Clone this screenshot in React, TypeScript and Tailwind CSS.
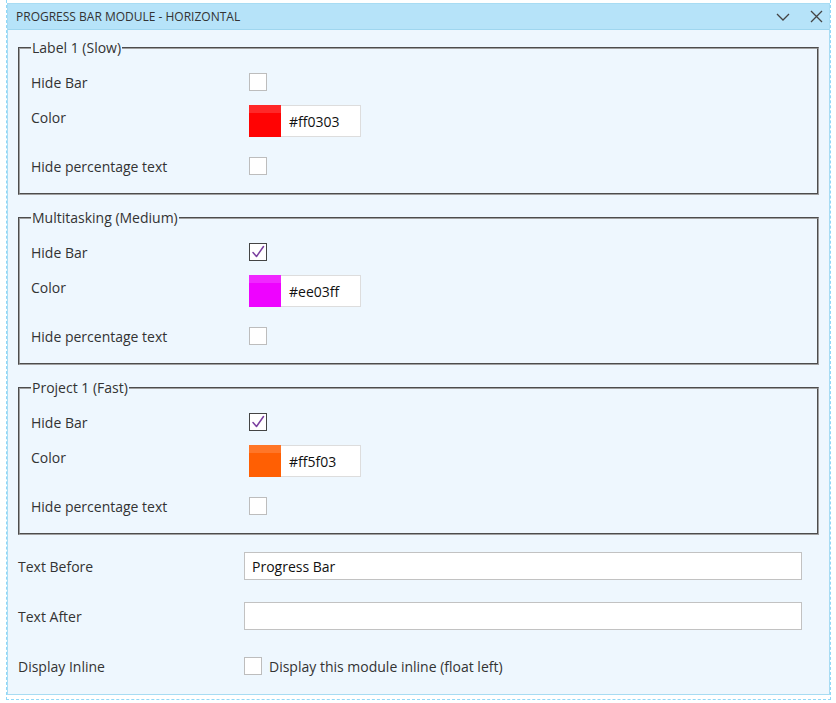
import React from 'react';

interface BarSettings {
  title: string;
  color: string;
  hideBar: boolean;
  hidePercent: boolean;
}

const bars: BarSettings[] = [
  { title: 'Label 1 (Slow)', color: '#ff0303', hideBar: false, hidePercent: false },
  { title: 'Multitasking (Medium)', color: '#ee03ff', hideBar: true, hidePercent: false },
  { title: 'Project 1 (Fast)', color: '#ff5f03', hideBar: true, hidePercent: false },
];

const Checkbox: React.FC<{ checked?: boolean }> = ({ checked }) => (
  <span
    className={
      checked
        ? 'flex h-[18px] w-[18px] items-center justify-center border border-[#444] bg-white'
        : 'flex h-[18px] w-[18px] items-center justify-center border border-[#bdbdbd] bg-white'
    }
  >
    {checked && (
      <svg width="14" height="14" viewBox="0 0 14 14" fill="none">
        <path d="M2 7.5 L5.5 11.5 L12.5 1.5" stroke="#7b3fa0" strokeWidth="1.5" strokeLinecap="round" strokeLinejoin="round" />
      </svg>
    )}
  </span>
);

const BarFieldset: React.FC<{ bar: BarSettings }> = ({ bar }) => (
  <fieldset className="m-0 border-2 border-[#a0a0a0] [border-style:groove] px-[11px] pt-[9px] pb-[11px]">
    <legend className="px-[1px] text-[14px] leading-[19px] text-[#333]">{bar.title}</legend>
    <div className="grid grid-cols-[218px_1fr]">
      <div className="flex h-[32px] items-center">Hide Bar</div>
      <div className="flex h-[32px] items-center">
        <Checkbox checked={bar.hideBar} />
      </div>
      <div className="mt-[7px] h-[32px] pt-[3px] leading-[19px]">Color</div>
      <div className="mt-[7px] flex h-[32px]">
        <span className="flex h-[32px] w-[32px] flex-col" style={{ backgroundColor: bar.color }}>
          <span className="h-[8px] w-full bg-white/15" />
        </span>
        <span className="flex h-[32px] w-[80px] items-center border border-l-0 border-[#ddd] bg-white pl-[8px] text-[14px] text-[#111]">
          {bar.color}
        </span>
      </div>
      <div className="mt-[13px] flex h-[32px] items-center">Hide percentage text</div>
      <div className="mt-[13px] flex h-[32px] items-center">
        <Checkbox checked={bar.hidePercent} />
      </div>
    </div>
  </fieldset>
);

const App: React.FC = () => {
  return (
    <div className="min-h-[703px] bg-white pl-[6px] font-['Open_Sans',sans-serif] text-[14px] text-[#333]">
      <div className="w-[825px] border-x border-b border-dashed border-[#8fd8f8] pt-[3px] pb-[4px]">
        <div className="border border-[#a8dcf3]">
          <div className="flex h-[26px] items-center justify-between border-b border-[#9fd6ef] bg-[#b6e3f9] pl-[8px] pr-[6px]">
            <span className="text-[12px] uppercase text-[#333]">Progress Bar Module - Horizontal</span>
            <div className="flex items-center gap-[20px]">
              <svg width="14" height="8" viewBox="0 0 14 8" fill="none">
                <path d="M1 1 L7 7 L13 1" stroke="#444" strokeWidth="1.3" />
              </svg>
              <svg width="13" height="13" viewBox="0 0 13 13" fill="none">
                <path d="M1 1 L12 12 M12 1 L1 12" stroke="#444" strokeWidth="1.3" />
              </svg>
            </div>
          </div>
          <div className="bg-[#eef7fe] px-[10px] pt-[8px] pb-[14px]">
            <div className="flex flex-col gap-[13px]">
              {bars.map((bar) => (
                <BarFieldset key={bar.title} bar={bar} />
              ))}
            </div>
            <div className="mt-[17px] grid grid-cols-[226px_558px] gap-y-[22px]">
              <div className="flex h-[28px] items-center">Text Before</div>
              <div className="flex h-[28px] items-center border border-[#c2c2c2] bg-white pl-[7px] text-[#111]">
                Progress Bar
              </div>
              <div className="flex h-[28px] items-center">Text After</div>
              <div className="h-[28px] border border-[#c2c2c2] bg-white" />
              <div className="flex h-[28px] items-center">Display Inline</div>
              <div className="flex h-[28px] items-center gap-[7px]">
                <Checkbox />
                <span>Display this module inline (float left)</span>
              </div>
            </div>
          </div>
        </div>
      </div>
    </div>
  );
};

export default App;
